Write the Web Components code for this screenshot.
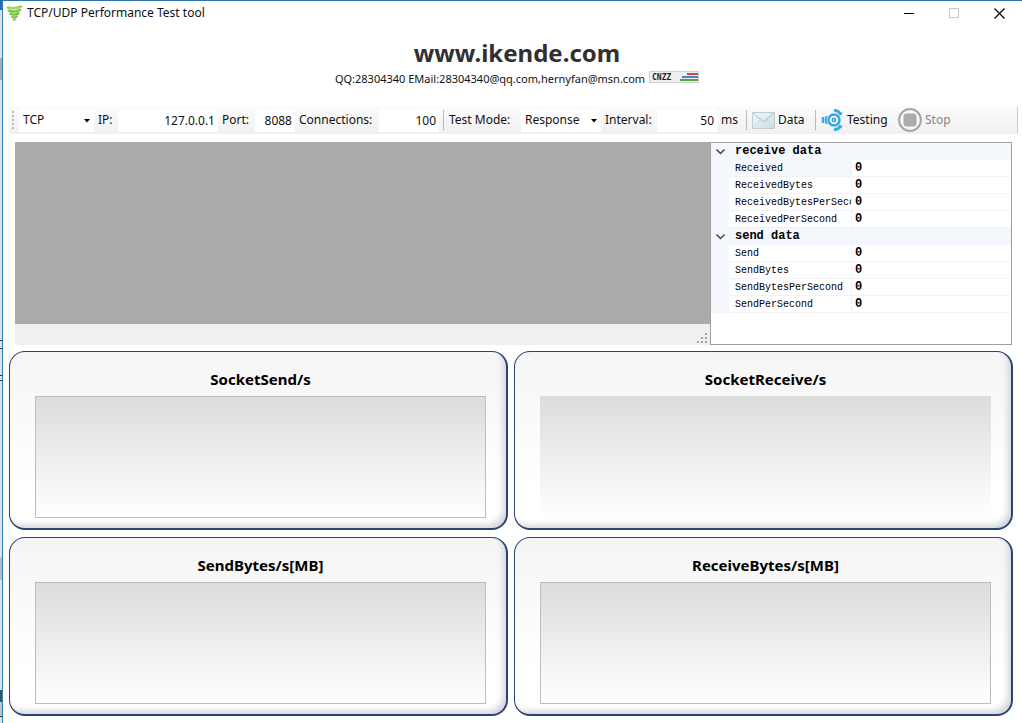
<!DOCTYPE html>
<html lang="en">
<head>
<meta charset="utf-8">
<title>TCP/UDP Performance Test tool</title>
<style>
  html, body { margin: 0; min-height: 100%; background: #fff; }
  body { font: 12px/16px "Noto Sans", "Open Sans", sans-serif; color: #111; }
</style>
</head>
<body>
<app-window>
  <title-bar slot="bar" label="TCP/UDP Performance Test tool"></title-bar>
  <site-banner></site-banner>
  <tool-bar></tool-bar>
  <data-view></data-view>
  <chart-grid>
    <chart-panel label="SocketSend/s"></chart-panel>
    <chart-panel label="SocketReceive/s" plain></chart-panel>
    <chart-panel label="SendBytes/s[MB]"></chart-panel>
    <chart-panel label="ReceiveBytes/s[MB]"></chart-panel>
  </chart-grid>
</app-window>

<script>
function define(name, render) {
  customElements.define(name, class extends HTMLElement {
    connectedCallback() {
      if (this.shadowRoot) return;
      this.attachShadow({ mode: 'open' }).innerHTML = render(this);
    }
  });
}

define('app-window', () => `
<style>
  :host { display: grid; grid-template-columns: 2px minmax(0, 1fr); min-height: 100vh; }
  .behind { background: linear-gradient(#1a6fb8 0 10px, #dfe1e4 10px 58px, #a9adb3 58px 80px, #dfe1e4 80px 340px, #333 340px 341px, #dfe1e4 341px 348px, #333 348px 349px, #dfe1e4 349px 375px, #333 375px 376px, #dfe1e4 376px 380px, #333 380px 381px, #dfe1e4 381px 557px, #b9bcc0 557px 580px, #dfe1e4 580px 690px, #356 690px 702px, #b9c4c8 702px 716px, #333 716px 717px, #dfe1e4 717px); }
  .frame { border-top: 1px solid #2f73ad; border-left: 1px solid #2e80b8; background: #fff; }
  main { padding: 0 9px 7px 6px; }
</style>
<div class="behind"></div>
<div class="frame"><slot name="bar"></slot><main><slot></slot></main></div>`);

define('title-bar', el => `
<style>
  :host { display: flex; align-items: center; height: 24px; padding-left: 3px; }
  .logo { margin-right: 4px; }
  span { flex: 1; }
  button { width: 45px; height: 24px; padding: 0; border: 0; background: none; display: grid; place-items: center; }
  svg { display: block; }
</style>
<svg class="logo" width="17" height="17" viewBox="0 0 17 17" fill="none" stroke-linecap="round">
  <path d="M2 2.500Q8.500 4.500 15 1.500" stroke="#9bd56a" stroke-width="2.600"/>
  <path d="M3 5.800Q8.500 7.800 14 4.800" stroke="#80c84a" stroke-width="2.600"/>
  <path d="M4.500 9Q8.500 10.500 12.500 8.200" stroke="#72bd3c" stroke-width="2.300"/>
  <path d="M6 12Q8.500 13 11 11.300" stroke="#7dc648" stroke-width="2"/>
  <path d="M7.500 14.800L9.500 14.200" stroke="#8ccf58" stroke-width="2"/>
</svg>
<span>${el.getAttribute('label')}</span>
<button aria-label="Minimize"><svg width="11" height="11"><path d="M0 5.500H10" stroke="#000"/></svg></button>
<button aria-label="Maximize" disabled><svg width="11" height="11"><path d="M.5 .5H9.500V9.500H.5Z" fill="none" stroke="#c4c4c4"/></svg></button>
<button aria-label="Close"><svg width="11" height="11"><path d="M.5 .5L10.500 10.500M10.500 .5L.5 10.500" stroke="#000" stroke-width="1.200"/></svg></button>`);

define('site-banner', () => `
<style>
  :host { display: block; height: 81px; box-sizing: border-box; padding-top: 11px; text-align: center; color: #111; }
  h1 { margin: 0; font-size: 24px; line-height: 34px; color: #303030; padding-left: 12px; }
  p { display: flex; justify-content: center; align-items: center; gap: 4px; margin: 0; font-size: 11px; line-height: 18px; padding-left: 12px; white-space: nowrap; }
  svg { box-sizing: border-box; width: 50px; height: 12px; border: 1px solid #d0d0d0; background: #eee; margin-bottom: 4px; }
</style>
<h1>www.ikende.com</h1>
<p><span>QQ:28304340 EMail:28304340@qq.com,hernyfan@msn.com</span>
<svg viewBox="0 0 48 10" role="img" aria-label="CNZZ">
  <text x="2" y="8" font-family="DejaVu Sans Mono, monospace" font-weight="700" font-size="8" fill="#222">CNZZ</text>
  <path d="M37 2H48" stroke="#d3483a" stroke-width="2"/><path d="M32 5H48" stroke="#3f88cf" stroke-width="2"/><path d="M30 8H48" stroke="#55a040" stroke-width="2"/>
</svg></p>`);

define('tool-bar', () => `
<style>
  :host { display: flex; align-items: center; height: 28px; margin-right: -5px; border-right: 1px solid #ccc; border-radius: 3px; box-sizing: border-box; background: linear-gradient(#fcfcfc, #f0f0f0); padding-left: 3px; overflow: hidden; }
  .grip { width: 2px; height: 18px; margin-right: 5px; background: repeating-linear-gradient(#b5b8bd 0 2px, transparent 2px 4px); }
  hr { width: 1px; height: 20px; border: 0; margin: 0 5px 0 4px; background: #bbb; }
</style>
<div class="grip"></div>
<tool-select name="Protocol" value="TCP" box="75"></tool-select>
<tool-field label="IP:" value="127.0.0.1" text="20" box="100"></tool-field>
<tool-field label="Port:" value="8088" text="33" box="40"></tool-field>
<tool-field label="Connections:" value="100" text="80" box="60"></tool-field>
<hr>
<tool-select label="Test Mode:" value="Response" text="72" box="80"></tool-select>
<tool-field label="Interval:" value="50" text="52" box="60" unit="ms"></tool-field>
<hr>
<tool-action label="Data" icon="mail" box="58"></tool-action>
<hr>
<tool-action label="Testing" icon="signal" box="73"></tool-action>
<tool-action label="Stop" icon="stop" box="60" disabled></tool-action>`);

define('tool-field', el => `
<style>
  :host { display: flex; align-items: center; flex: none; margin-left: 4px; }
  :host([unit]) { width: 137px; }
  label { width: ${el.getAttribute('text')}px; white-space: nowrap; }
  input { box-sizing: border-box; width: ${el.getAttribute('box')}px; height: 23px; padding: 0 3px; border: 0; background: #fff; color: inherit; font: inherit; text-align: right; }
  span { margin-left: 4px; }
</style>
<label for="f">${el.getAttribute('label')}</label><input id="f" value="${el.getAttribute('value')}">${el.hasAttribute('unit') ? '<span>' + el.getAttribute('unit') + '</span>' : ''}`);

define('tool-select', el => `
<style>
  :host { display: flex; align-items: center; flex: none; }
  label { width: ${el.getAttribute('text')}px; white-space: nowrap; }
  .box { position: relative; width: ${el.getAttribute('box')}px; height: 23px; }
  select { appearance: none; width: 100%; height: 100%; padding: 0 4px; border: 0; border-radius: 0; background: #fff; color: inherit; font: inherit; }
  svg { position: absolute; right: 4px; top: 10px; pointer-events: none; }
</style>
${el.hasAttribute('label') ? '<label for="s">' + el.getAttribute('label') + '</label>' : ''}
<div class="box"><select id="s" aria-label="${el.getAttribute('label') || el.getAttribute('name')}"><option>${el.getAttribute('value')}</option></select>
<svg width="6" height="4"><path d="M0 0H6L3 3.500Z" fill="#000"/></svg></div>`);

const icons = {
  mail: `<svg width="23" height="24" viewBox="0 0 23 24"><defs><linearGradient id="m" x2="1" y2="1"><stop stop-color="#f4fafb"/><stop offset="1" stop-color="#c8dde5"/></linearGradient></defs><path d="M.5 4.500H22.500V20.500H.5Z" fill="url(#m)" stroke="#c3ced2"/><path d="M1 5L11.500 14L22 5" fill="none" stroke="#a4bbc3"/><path d="M1 20L8.500 12M22 20L14.500 12" fill="none" stroke="#cddadf"/></svg>`,
  signal: `<svg width="23" height="24" viewBox="0 0 23 24" fill="none" stroke="#35aae2"><circle cx="13" cy="12" r="5.500" stroke-width="2.500"/><circle cx="13" cy="12" r="1.600" stroke-width="1.600"/><path d="M13 2.500Q17 2 19 5.500M13 21.500Q17 22 19 18.500" stroke-width="3"/><path d="M18 6.500L21 5M18 17.500L21 19" stroke-width="2"/><path d="M5.500 8Q4 12 5.500 16" stroke-width="2"/><path d="M2 9V15" stroke-width="2.500"/></svg>`,
  stop: `<svg width="24" height="24" viewBox="0 0 24 24"><circle cx="12" cy="12" r="10.900" fill="#f7f7f7" stroke="#a5a5a5" stroke-width="2"/><rect x="5.500" y="5.500" width="13" height="13" rx="3" fill="#acacac"/></svg>`
};
define('tool-action', el => `
<style>
  :host { display: block; flex: none; width: ${el.getAttribute('box')}px; margin-right: 1px; }
  :host([icon="signal"]) { margin-right: 4px; }
  button { display: flex; align-items: center; gap: 3px; padding: 0; border: 0; background: none; color: inherit; font: inherit; }
  button:disabled { color: #858585; }
  svg { display: block; flex: none; }
</style>
<button ${el.hasAttribute('disabled') ? 'disabled' : ''}>${icons[el.getAttribute('icon')]}${el.getAttribute('label')}</button>`);

define('data-view', () => `
<style>
  :host { display: grid; grid-template-columns: minmax(0, 1fr) 302px; height: 203px; margin: 8px 1px 6px 6px; }
  .list { display: flex; flex-direction: column; background: #ababab; }
  .status { display: flex; align-items: flex-end; justify-content: flex-end; height: 21px; margin-top: auto; background: #f0f0f0; padding: 0 3px 2px 0; box-sizing: border-box; }
</style>
<div class="list"><div class="status"><svg width="10" height="10" fill="#a5a5a5"><path d="M8 0h2v2h-2zM4 4h2v2h-2zM8 4h2v2h-2zM0 8h2v2h-2zM4 8h2v2h-2zM8 8h2v2h-2z"/></svg></div></div>
<property-grid></property-grid>`);

const groups = [
  ['receive data', ['Received', 'ReceivedBytes', 'ReceivedBytesPerSecond', 'ReceivedPerSecond']],
  ['send data', ['Send', 'SendBytes', 'SendBytesPerSecond', 'SendPerSecond']]
];
define('property-grid', () => `
<style>
  :host { display: block; border: 1px solid #a0a0a0; background: #fff; font-family: "Liberation Mono", monospace; color: #000; }
  table { width: 100%; table-layout: fixed; border-collapse: separate; border-spacing: 0; }
  col.gutter { width: 18px; } col.name { width: 123px; }
  th, td { box-sizing: border-box; height: 17px; padding: 1px 0 0; line-height: 15px; text-align: left; border-bottom: 1px solid #f1f3f7; white-space: nowrap; overflow: hidden; }
  tr > :first-child, .group th { background: #f4f7fc; border-color: #f4f7fc; }
  .group th { font-size: 12px; font-weight: 700; padding-left: 6px; }
  .name { font-size: 10px; font-weight: 400; padding-left: 6px; border-right: 1px solid #f1f3f7; }
  .active .name { background: #f4f7fc; }
  .value { font-size: 12px; font-weight: 700; padding-left: 3px; }
  svg { display: block; margin-left: 5px; }
</style>
<table><colgroup><col class="gutter"><col class="name"><col></colgroup><tbody>
${groups.map(([title, names]) => `<tr class="group"><td><svg width="9" height="6"><path d="M.5 .5L4.500 4.500L8.500 .5" fill="none" stroke="#444" stroke-width="1.500"/></svg></td><th colspan="2">${title}</th></tr>` +
  names.map(n => `<tr class="${n === 'Received' ? 'active' : ''}"><td></td><th class="name" scope="row">${n}</th><td class="value">0</td></tr>`).join('')).join('')}
</tbody></table>`);

define('chart-grid', () => `
<style>:host { display: grid; grid-template-columns: repeat(2, minmax(0, 1fr)); gap: 7px 6px; }</style><slot></slot>`);

define('chart-panel', el => `
<style>
  :host { display: block; box-sizing: border-box; height: 179px; padding: 16px 20px 11px 25px; border: solid #2b4470; border-width: 1px 2px 2px 1px; border-radius: 16px; background: linear-gradient(#f5f5f5, #fff 75%); box-shadow: inset -5px -5px 6px -2px #d2d5da; }
  h2 { margin: 0; height: 28px; font-size: 15px; line-height: 22px; text-align: center; color: #000; }
  .plot { box-sizing: border-box; height: 122px; border: 1px solid #bdbdbd; background: linear-gradient(#dcdcdc, #fff); }
  :host([plain]) .plot { border-color: transparent; background-origin: border-box; }
</style>
<h2>${el.getAttribute('label')}</h2><div class="plot"></div>`);
</script>
</body>
</html>
